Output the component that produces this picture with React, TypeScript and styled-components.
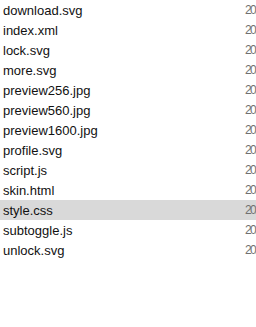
import React from "react";
import styled, { createGlobalStyle } from "styled-components";

const Global = createGlobalStyle`
  html, body { margin: 0; padding: 0; background: #ffffff; overflow: hidden; }
  body { width: 256px; height: 327px; }
`;

const List = styled.div`
  display: flex;
  flex-direction: column;
  width: 256px;
  overflow: hidden;
  font-family: "Liberation Sans", Arial, sans-serif;
  font-size: 13px;
`;

const Row = styled.div<{ $selected?: boolean }>`
  display: flex;
  align-items: center;
  height: 20px;
  background: ${(p) => (p.$selected ? "#d9d9d9" : "transparent")};
  white-space: nowrap;
`;

const Name = styled.span`
  flex: 0 0 245px;
  padding-left: 3px;
  box-sizing: border-box;
  color: #111111;
  overflow: hidden;
`;

const DateCell = styled.span`
  flex: 0 0 auto;
  font-size: 12px;
  letter-spacing: -1.6px;
  color: #707070;
`;

const files = [
  "download.svg",
  "index.xml",
  "lock.svg",
  "more.svg",
  "preview256.jpg",
  "preview560.jpg",
  "preview1600.jpg",
  "profile.svg",
  "script.js",
  "skin.html",
  "style.css",
  "subtoggle.js",
  "unlock.svg",
];

export default function App() {
  return (
    <>
      <Global />
      <List>
        {files.map((f) => (
          <Row key={f} $selected={f === "style.css"}>
            <Name>{f}</Name>
            <DateCell>2020-01-01</DateCell>
          </Row>
        ))}
      </List>
    </>
  );
}
